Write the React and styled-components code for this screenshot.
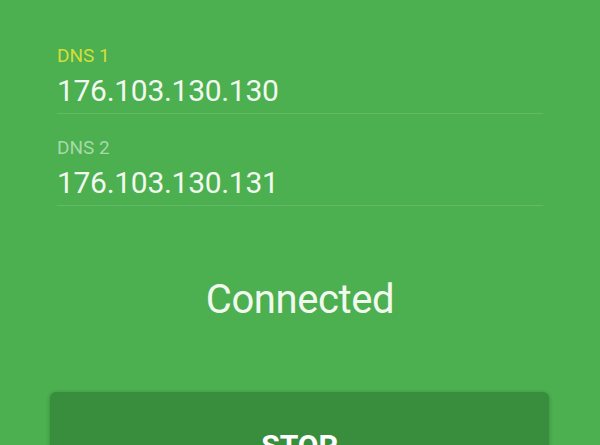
import React from 'react'
import styled, { createGlobalStyle } from 'styled-components'

const GlobalStyle = createGlobalStyle`
  html, body {
    margin: 0;
    padding: 0;
    background: #4caf50;
  }
  body {
    font-family: Roboto, "Noto Sans", "Liberation Sans", sans-serif;
    -webkit-font-smoothing: antialiased;
  }
`

const Screen = styled.div`
  width: 600px;
  height: 445px;
  overflow: hidden;
  background: #4caf50;
  padding-top: 46px;
  box-sizing: border-box;
  display: flex;
  flex-direction: column;
`

const Fields = styled.div`
  display: flex;
  flex-direction: column;
  gap: 24px;
  padding: 0 57px;
  flex-shrink: 0;
`

const Field = styled.div`
  display: flex;
  flex-direction: column;
  gap: 7px;
  padding-bottom: 4px;
  border-bottom: 1px solid rgba(255, 255, 255, 0.13);
`

const Label = styled.span`
  font-size: 19px;
  line-height: 20px;
  color: ${p => (p.$focused ? '#d2df3b' : '#a8d9a8')};
`

const Value = styled.span`
  font-size: 30px;
  line-height: 36px;
  letter-spacing: -0.3px;
  color: #f1f9ef;
`

const Status = styled.div`
  margin-top: 70px;
  text-align: center;
  font-size: 40px;
  line-height: 48px;
  letter-spacing: -0.4px;
  color: #f1f9ef;
  flex-shrink: 0;
`

const StopButton = styled.button`
  margin: 68px 51px 0 50px;
  padding: 36px 0;
  border: none;
  border-radius: 6px;
  background: #388e3c;
  box-shadow: 0 1px 4px rgba(0, 0, 0, 0.22);
  font-family: inherit;
  font-size: 30px;
  line-height: 36px;
  font-weight: 700;
  color: #ffffff;
  text-transform: uppercase;
  flex-shrink: 0;
`

const servers = [
  { label: 'DNS 1', value: '176.103.130.130', focused: true },
  { label: 'DNS 2', value: '176.103.130.131', focused: false },
]

export default function App() {
  return (
    <>
      <GlobalStyle />
      <Screen>
        <Fields>
          {servers.map(s => (
            <Field key={s.label}>
              <Label $focused={s.focused}>{s.label}</Label>
              <Value>{s.value}</Value>
            </Field>
          ))}
        </Fields>
        <Status>Connected</Status>
        <StopButton>Stop</StopButton>
      </Screen>
    </>
  )
}
